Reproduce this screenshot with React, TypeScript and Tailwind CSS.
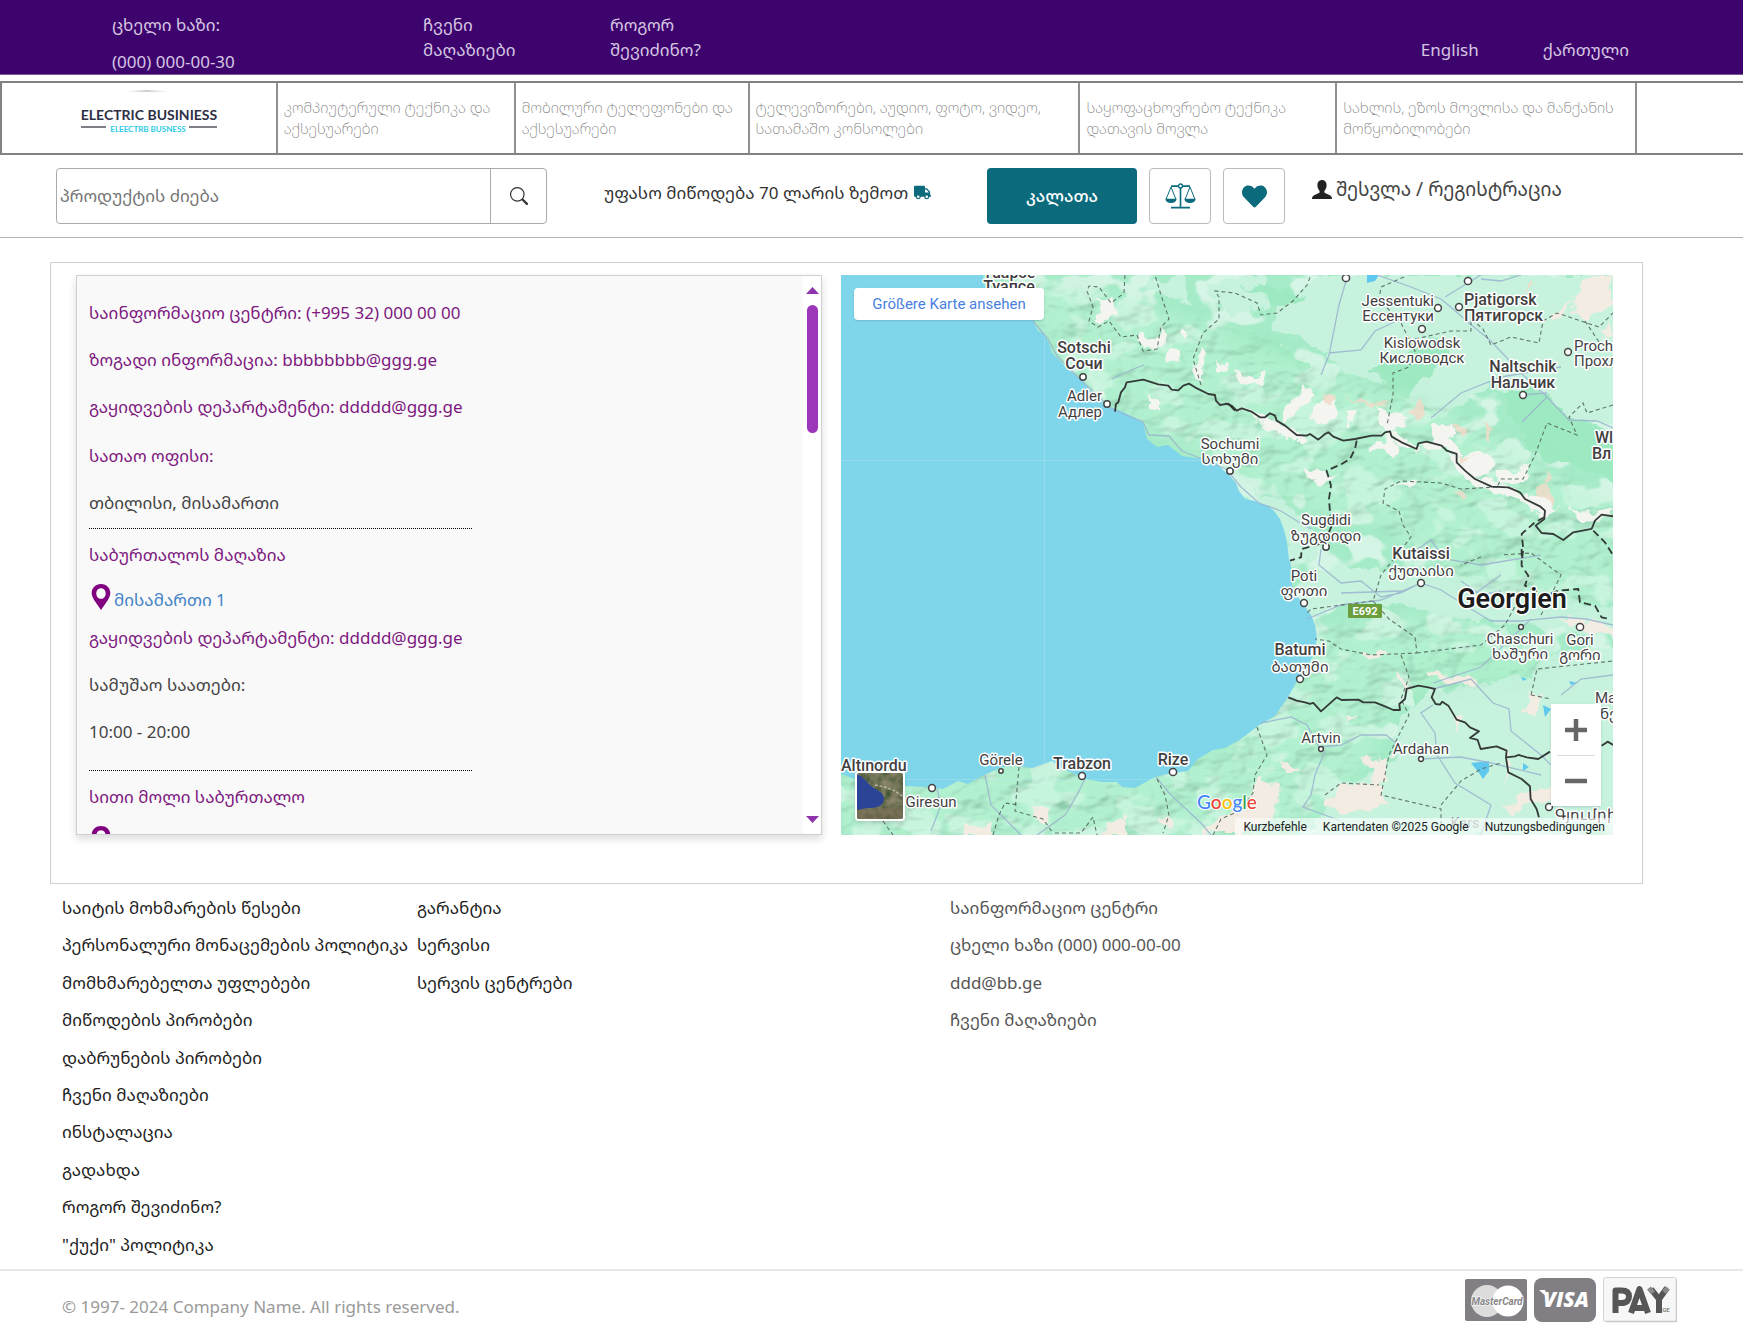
import type { ReactNode } from "react";
import { BsSearch } from "react-icons/bs";
import { FaHeart, FaTruck } from "react-icons/fa";

const navItems = [
  ["კომპიუტერული ტექნიკა და", "აქსესუარები"],
  ["მობილური ტელეფონები და", "აქსესუარები"],
  ["ტელევიზორები, აუდიო, ფოტო, ვიდეო,", "სათამაშო კონსოლები"],
  ["საყოფაცხოვრებო ტექნიკა", "დათავის მოვლა"],
  ["სახლის, ეზოს მოვლისა და მანქანის", "მოწყობილობები"],
];

const footerInfo = [
  "საიტის მოხმარების წესები",
  "პერსონალური მონაცემების პოლიტიკა",
  "მომხმარებელთა უფლებები",
  "მიწოდების პირობები",
  "დაბრუნების პირობები",
  "ჩვენი მაღაზიები",
  "ინსტალაცია",
  "გადახდა",
  "როგორ შევიძინო?",
  '"ქუქი" პოლიტიკა',
];
const footerService = ["გარანტია", "სერვისი", "სერვის ცენტრები"];
const footerContact = ["საინფორმაციო ცენტრი", "ცხელი ხაზი (000) 000-00-00", "ddd@bb.ge", "ჩვენი მაღაზიები"];

function TopBar() {
  return (
    <div className="flex items-start border-b border-[#7b5a96] bg-[#3d046e] pt-3 pr-[114px] pl-28 leading-[25px] text-[#d5c6e2]">
      <div className="w-[311px]">
        <p>ცხელი ხაზი:</p>
        <p className="mt-3">(000) 000-00-30</p>
      </div>
      <a href="#stores" className="w-[187px]">
        ჩვენი
        <br />
        მაღაზიები
      </a>
      <a href="#how">
        როგორ
        <br />
        შევიძინო?
      </a>
      <div className="mt-[25px] ml-auto flex gap-16">
        <a href="#en">English</a>
        <a href="#ka">ქართული</a>
      </div>
    </div>
  );
}

function Logo() {
  return (
    <svg viewBox="0 0 140 44" className="h-11 w-[140px] overflow-visible" role="img" aria-label="Electric Business">
      <defs>
        <radialGradient id="shade" cx="0.5" cy="0" r="0.5">
          <stop offset="0" stopColor="#8a8a8a" />
          <stop offset="1" stopColor="#ffffff" stopOpacity="0" />
        </radialGradient>
      </defs>
      <ellipse cx="68" cy="1" rx="30" ry="2.5" fill="url(#shade)" />
      <text x="70" y="28" textAnchor="middle" fill="#2e2f44" className="font-['Lato',sans-serif] text-[14px] font-bold">
        ELECTRIC BUSINIESS
      </text>
      <path d="M2 35H27M110 35H138" stroke="#55555f" strokeWidth="1.6" />
      <text x="69" y="40" textAnchor="middle" fill="#2ccbe6" className="font-['Lato',sans-serif] text-[8px] font-bold">
        ELEECTRB BUSNESS
      </text>
    </svg>
  );
}

function CategoryNav() {
  return (
    <nav className="mt-[6px] grid h-[74px] grid-cols-[276fr_238fr_234fr_331fr_257fr_300fr_106fr] border-y-2 border-l-2 border-[#828282]">
      <a href="#home" className="flex items-start justify-center border-r-2 border-[#909090] pt-[9px] pl-5">
        <Logo />
      </a>
      {navItems.map(([a, b]) => (
        <a
          key={a}
          href="#category"
          className="flex flex-col justify-center border-r-2 border-[#909090] pl-[6px] text-[15px] leading-[21px] font-extralight whitespace-nowrap text-[#777]"
        >
          <span>{a}</span>
          <span>{b}</span>
        </a>
      ))}
      <div />
    </nav>
  );
}

function ScalesIcon() {
  return (
    <svg viewBox="0 0 31 26" className="h-[26px] w-[31px]" fill="none" stroke="#0b6b7d" aria-hidden="true">
      <circle cx="15.5" cy="3" r="2" strokeWidth="1.3" />
      <path d="M6 3.2h7.5M17.5 3.2H25" strokeWidth="1.8" />
      <path d="M15.5 5v19M6 24.6h19" strokeWidth="1.6" />
      <path d="M6 4 1.2 16M6 4l4.8 12M25 4l-4.8 12M25 4l4.8 12" strokeWidth="1" />
      <path
        d="M0.3 15.8H11.7C11.3 18.7 9 20 6 20S0.7 18.7 0.3 15.8ZM19.3 15.8H30.7C30.3 18.7 28 20 25 20S19.7 18.7 19.3 15.8Z"
        fill="#0b6b7d"
        stroke="none"
      />
    </svg>
  );
}

function UserIcon() {
  return (
    <svg viewBox="0 0 20 19" className="h-[19px] w-5" fill="#222" aria-hidden="true">
      <path d="M10 0C7.2 0 5.4 2.2 5.4 5.2c0 2.2 1 4.4 2.2 5.7v1.7C6.5 13.6 3.3 14.5 1.7 15.5.4 16.3 0 17.400 0 19h20c0-1.600-.4-2.700-1.700-3.500-1.600-1-4.800-1.900-5.900-2.900v-1.700c1.200-1.300 2.200-3.500 2.200-5.700C14.600 2.200 12.800 0 10 0Z" />
    </svg>
  );
}

function Toolbar() {
  return (
    <div className="flex h-[83px] items-start border-b border-[#b3b3b3] pt-[13px] pl-14">
      <form className="flex h-14 w-[491px] rounded border border-[#aaa]">
        <label htmlFor="search" className="sr-only">
          პროდუქტის ძიება
        </label>
        <input
          id="search"
          type="text"
          placeholder="პროდუქტის ძიება"
          className="min-w-0 flex-1 rounded-l pl-[3px] outline-none placeholder:text-[#757575]"
        />
        <button type="button" aria-label="ძიება" className="flex w-14 items-center justify-center border-l border-[#aaa]">
          <BsSearch size={18} color="#333" />
        </button>
      </form>
      <p className="mt-3 ml-[57px] flex w-[383px] items-center gap-[6px] leading-[25px] text-[#333]">
        უფასო მიწოდება 70 ლარის ზემოთ
        <FaTruck size={17} color="#0b6b7d" />
      </p>
      <button type="button" className="h-14 w-[150px] rounded bg-[#0b6b7d] font-medium text-white">
        კალათა
      </button>
      <button type="button" aria-label="შედარება" className="ml-3 flex h-14 w-[62px] items-center justify-center rounded border border-[#bbb]">
        <ScalesIcon />
      </button>
      <button type="button" aria-label="რჩეულები" className="ml-3 flex h-14 w-[62px] items-center justify-center rounded border border-[#bbb]">
        <FaHeart size={25} color="#0b6b7d" />
      </button>
      <a href="#login" className="mt-2 ml-[27px] flex items-center gap-1 text-[19px] leading-[27px] text-[#444]">
        <UserIcon />
        შესვლა / რეგისტრაცია
      </a>
    </div>
  );
}

function PinIcon() {
  return (
    <svg viewBox="0 0 20 26" className="h-[26px] w-5" aria-hidden="true">
      <path
        fillRule="evenodd"
        fill="#800080"
        d="M10 0C4.500 0 .7 4 .7 9c0 2.600 1.100 4.700 2.400 7L10 26l6.900-10c1.300-2.300 2.400-4.400 2.400-7C19.300 4 15.500 0 10 0Zm0 4.200c2.700 0 4.700 2.200 4.700 5.200s-2 5.400-4.700 5.400-4.700-2.400-4.700-5.400S7.300 4.200 10 4.200Z"
      />
    </svg>
  );
}

function Rule() {
  return <hr className="mt-[13px] border-t border-dotted border-black" />;
}

function AddressLink({ children }: { children: ReactNode }) {
  return (
    <a href="#address" className="mt-[17px] flex gap-[3px] pl-[2px] text-[#4283c4]">
      <PinIcon />
      <span className="mt-[3px]">{children}</span>
    </a>
  );
}

function StoresPanel() {
  return (
    <section className="flex h-[560px] border border-[#d0d0d0] bg-[#f9f9f9] shadow-[0_4px_8px_rgba(0,0,0,0.14)]">
      <div className="flex-1 overflow-hidden pt-6 pl-3">
        <div className="w-fit min-w-[383px] leading-[25px] whitespace-nowrap text-[#444]">
          <p className="text-[#7d187f]">საინფორმაციო ცენტრი: (+995 32) 000 00 00</p>
          <p className="mt-[22px] text-[#7d187f]">ზოგადი ინფორმაცია: bbbbbbbb@ggg.ge</p>
          <p className="mt-[22px] text-[#7d187f]">გაყიდვების დეპარტამენტი: ddddd@ggg.ge</p>
          <p className="mt-6 text-[#7d187f]">სათაო ოფისი:</p>
          <p className="mt-[22px]">თბილისი, მისამართი</p>
          <Rule />
          <p className="mt-[13px] text-[#7d187f]">საბურთალოს მაღაზია</p>
          <AddressLink>მისამართი 1</AddressLink>
          <p className="mt-[13px] text-[#7d187f]">გაყიდვების დეპარტამენტი: ddddd@ggg.ge</p>
          <p className="mt-[22px]">სამუშაო საათები:</p>
          <p className="mt-[22px] mb-[26px]">10:00 - 20:00</p>
          <Rule />
          <p className="mt-[13px] text-[#7d187f]">სითი მოლი საბურთალო</p>
          <AddressLink>მისამართი 2</AddressLink>
        </div>
      </div>
      <div className="flex w-[18px] flex-col items-center bg-white pt-[11px] pb-[11px]">
        <svg viewBox="0 0 13 7" className="h-[7px] w-[13px]" aria-hidden="true">
          <path d="M0 7 6.500 0 13 7Z" fill="#8f34ad" />
        </svg>
        <div className="mt-[11px] h-32 w-[11px] rounded-full bg-[#9b37b8]" />
        <svg viewBox="0 0 13 7" className="mt-auto h-[7px] w-[13px]" aria-hidden="true">
          <path d="M0 0 6.500 7 13 0Z" fill="#8f34ad" />
        </svg>
      </div>
    </section>
  );
}

const SEA =
  "M0 0H142L145 18 203 45 192 46 197 56 203 59 207 66 211 78 224 91 232 98 242 107 254 121 266 131 280 136 302 147 306 164 316 172 327 170 341 181 361 184 374 187 381 194 389 201 395 208 398 216 404 224 414 226 427 231 433 236 439 244 443 255 446 267 448 284 451 295 451 310 456 321 464 331 470 340 474 350 476 364 472 380 464 397 455 408 447 422 434 441 417 451 400 464 384 473 372 475 357 484 347 496 331 498 314 502 294 513 281 512 276 507 261 507 244 504 227 496 219 492 211 486 191 493 176 491 161 492 150 497 141 501 127 509 117 506 102 514 84 512 64 511 14 504 0 499Z";

type Label = { x: number; y: number; t: string; bold?: boolean; anchor?: "start" | "middle" | "end" };

const labels: Label[] = [
  { x: 168, y: 3, t: "Tuapse", bold: true },
  { x: 168, y: 17, t: "Туапсе", bold: true },
  { x: 243, y: 78, t: "Sotschi", bold: true },
  { x: 243, y: 94, t: "Сочи", bold: true },
  { x: 261, y: 126, t: "Adler", anchor: "end" },
  { x: 261, y: 142, t: "Адлер", anchor: "end" },
  { x: 389, y: 174, t: "Sochumi" },
  { x: 389, y: 189, t: "სოხუმი" },
  { x: 593, y: 31, t: "Jessentuki", anchor: "end" },
  { x: 593, y: 46, t: "Ессентуки", anchor: "end" },
  { x: 623, y: 30, t: "Pjatigorsk", bold: true, anchor: "start" },
  { x: 623, y: 46, t: "Пятигорск", bold: true, anchor: "start" },
  { x: 581, y: 73, t: "Kislowodsk" },
  { x: 581, y: 88, t: "Кисловодск" },
  { x: 682, y: 97, t: "Naltschik", bold: true },
  { x: 682, y: 113, t: "Нальчик", bold: true },
  { x: 733, y: 76, t: "Proch", anchor: "start" },
  { x: 733, y: 91, t: "Прохл", anchor: "start" },
  { x: 754, y: 168, t: "Wl", bold: true, anchor: "start" },
  { x: 751, y: 184, t: "Вл", bold: true, anchor: "start" },
  { x: 485, y: 250, t: "Sugdidi" },
  { x: 485, y: 266, t: "ზუგდიდი" },
  { x: 580, y: 284, t: "Kutaissi", bold: true },
  { x: 580, y: 301, t: "ქუთაისი" },
  { x: 463, y: 306, t: "Poti" },
  { x: 463, y: 321, t: "ფოთი" },
  { x: 459, y: 380, t: "Batumi", bold: true },
  { x: 459, y: 397, t: "ბათუმი" },
  { x: 679, y: 369, t: "Chaschuri" },
  { x: 679, y: 384, t: "ხაშური" },
  { x: 739, y: 370, t: "Gori" },
  { x: 739, y: 385, t: "გორი" },
  { x: 754, y: 428, t: "Ma", anchor: "start" },
  { x: 759, y: 444, t: "ნე", anchor: "start" },
  { x: 480, y: 468, t: "Artvin" },
  { x: 580, y: 479, t: "Ardahan" },
  { x: 0, y: 496, t: "Altınordu", bold: true, anchor: "start" },
  { x: 90, y: 532, t: "Giresun" },
  { x: 160, y: 490, t: "Görele" },
  { x: 241, y: 494, t: "Trabzon", bold: true },
  { x: 332, y: 490, t: "Rize", bold: true },
  { x: 714, y: 545, t: "Գյումրի", anchor: "start" },
];

const towns: [number, number, number][] = [
  [242, 102, 3.2], [266, 129, 3.2], [389, 196, 3.2], [505, 3, 3.6], [627, 6, 3.6], [597, 33, 3.4], [618, 32, 3.4],
  [581, 54, 3.4], [682, 120, 3.4], [727, 77, 3.4], [485, 272, 3.2], [580, 308, 3.4], [463, 328, 3.4], [459, 404, 3.4],
  [680, 352, 2.4], [739, 352, 3.6], [480, 474, 2.4], [580, 484, 2.4], [91, 513, 3.4], [160, 496, 2.2], [241, 501, 3.4],
  [332, 497, 3.6], [708, 532, 3.4],
];

function MapDrawing() {
  return (
    <svg viewBox="0 0 772 560" preserveAspectRatio="xMidYMid slice" className="h-full w-full" role="img" aria-label="Georgien">
      <defs>
        <filter id="rough" x="-5%" y="-5%" width="110%" height="110%">
          <feTurbulence type="fractalNoise" baseFrequency="0.06" numOctaves="3" seed="4" result="n" />
          <feDisplacementMap in="SourceGraphic" in2="n" scale="18" xChannelSelector="R" yChannelSelector="G" />
        </filter>
        <filter id="relief" x="0" y="0" width="100%" height="100%">
          <feTurbulence type="fractalNoise" baseFrequency="0.028 0.045" numOctaves="3" seed="11" result="n" />
          <feDiffuseLighting in="n" surfaceScale="9" diffuseConstant="1.2" lightingColor="#ffffff" result="l">
            <feDistantLight azimuth="225" elevation="55" />
          </feDiffuseLighting>
          <feComposite in="l" in2="SourceAlpha" operator="in" />
        </filter>
        <filter id="patches" x="0" y="0" width="100%" height="100%">
          <feTurbulence type="fractalNoise" baseFrequency="0.022 0.03" numOctaves="3" seed="23" result="n" />
          <feColorMatrix in="n" type="matrix" values="0 0 0 0 0.79  0 0 0 0 0.95  0 0 0 0 0.87  14 0 0 0 -7.4" result="p" />
          <feComposite in="p" in2="SourceAlpha" operator="in" />
        </filter>
        <filter id="soft">
          <feGaussianBlur stdDeviation="8" />
        </filter>
        <mask id="hills">
          <g filter="url(#soft)" fill="#fff">
            <path d="M180 0 300 30 400 60 470 90 540 110 640 150 700 190 772 230V310L700 330 600 300 540 250 480 240 380 190 280 140 190 40Z" />
            <path d="M450 360 560 340 720 370 700 400 560 420 530 480 450 560H0V500L200 490 380 480Z" />
            <path d="M700 270H772V330H690Z" />
          </g>
        </mask>
      </defs>

      <rect width="772" height="560" fill="#a5ebc8" />
      <rect width="772" height="560" fill="#000" filter="url(#patches)" opacity="0.75" />

      <g filter="url(#rough)" fill="#c6f2de">
        <path d="M478 0H790V150L700 140 650 110 600 140 540 110 500 95 470 70 430 50 440 25Z" />
        <path d="M360 10 420 0 430 30 390 40ZM215 20 235 16 232 34ZM300 10 340 0 350 30Z" />
        <path d="M455 310 500 290 560 300 640 300 720 320 790 340V365L690 350 620 345 560 330 500 325 475 345Z" />
        <path d="M590 420 640 400 720 380 790 370V560H470L500 510 550 490 560 440Z" />
        <path d="M405 215 440 225 470 250 480 280 450 290 440 245Z" />
      </g>
      <g filter="url(#rough)" fill="#9de9c1">
        <path d="M530 95 590 60 615 70 560 130ZM660 120 690 110 730 140 790 170V215L740 190 690 180Z" />
        <path d="M400 10 440 15 470 20 440 30ZM385 60 440 65 470 90 430 100 390 85Z" />
        <path d="M560 380 640 375 700 385 690 400 600 410 575 430Z" />
      </g>

      <g mask="url(#hills)">
        <rect width="772" height="560" fill="#9df0c3" opacity="0.4" />
        <rect width="772" height="560" fill="#000" filter="url(#relief)" opacity="0.3" className="mix-blend-multiply" />
      </g>

      <g filter="url(#rough)" fill="#f4f4f1">
        <path d="M256 26 272 24 275 36 264 46 257 42ZM322 48 326 58 324 68 315 74 300 72 298 60 308 66 318 60ZM342 54 348 60 344 66 339 60ZM332 72 340 84 326 88ZM358 68 364 76 358 92 362 106 354 102 352 84ZM378 84 386 92 380 98ZM308 124 320 124 320 136 308 134Z" />
        <path d="M392 96 410 102 424 102 418 110 398 106ZM440 130 455 118 465 108 470 118 456 140 444 150ZM474 128 490 118 496 124 488 150 472 146ZM504 134 516 134 512 150 504 150ZM536 132 560 140 566 148 552 156 546 150ZM590 152 612 148 606 170 592 166Z" />
        <path d="M464 194 480 196 498 202 484 208 466 204ZM532 172 548 160 564 178 552 182ZM610 180 630 176 652 182 646 198 620 196ZM656 196 690 194 686 206 662 208ZM690 222 706 224 718 234 700 240ZM548 206 576 208 570 212ZM730 236 772 234 770 244 740 246ZM604 182 620 184 640 202 672 212 700 230 704 240 690 230 656 218 630 208Z" />
        <path d="M396 132 430 146 456 156 470 166 454 166 420 152ZM540 150 566 166 580 176 560 172ZM576 170 600 162 622 176 610 180Z" />
      </g>
      <g filter="url(#rough)" fill="#f3ece2">
        <path d="M524 378 544 378 548 380 536 384 522 382ZM558 394 566 410 572 418 562 412ZM586 396 640 404 632 408 590 402ZM508 436 518 440 508 446ZM440 482 460 496 448 496ZM420 500 440 520 430 540 400 560 360 560 395 530ZM500 510 540 504 550 530 500 540 484 530ZM520 486 550 480 540 510ZM125 552 150 548 152 560H122ZM196 532 208 530 208 546 194 546ZM268 548 284 544 284 560H258ZM320 544 330 542 332 554 322 556ZM688 418 700 420 696 440 684 436ZM610 438 620 446 616 456ZM664 470 672 490 666 510Z" />
        <path d="M660 536 720 524 706 512 680 520ZM740 6 772 0V30L740 46 732 36ZM710 50 736 24 712 40ZM740 50 760 58 770 46 768 62ZM716 340 740 346 772 352 768 360 740 354Z" />
      </g>
      <g filter="url(#rough)" fill="#f0dcc8" opacity="0.85">
        <path d="M480 116 496 120 490 134 482 126ZM504 118 530 126 552 130 530 132ZM566 140 580 124 584 140 572 144ZM612 148 626 152 622 162 612 158ZM640 150 654 156 644 166ZM618 176 632 180 622 186ZM708 196 712 206 700 208ZM694 210 704 208 712 228 696 224ZM614 216 628 218 622 224ZM690 16 690 8 684 20Z" />
      </g>

      <path d={SEA} fill="#7fd6ea" />
      <path d="M0 185.500H365M203.500 45V490M64 504.500H314" stroke="#b8e8f2" strokeWidth="1" opacity="0.35" />
      <g fill="#5fc8ee">
        <path d="M526 0H538L534 6 526 8ZM630 488 648 486 648 496 642 504 638 498ZM702 430 710 434 704 442ZM682 488 688 492 682 496ZM728 406 736 408 730 410ZM604 304 608 302ZM680 402 686 404 682 406Z" />
      </g>

      <g fill="none" stroke="#9bb4cf" strokeWidth="1.300" opacity="0.85">
        <path d="M192 46 207 64 216 81 242 107 271 134 302 147 308 160 328 161 341 176 361 184 385 194 400 212 418 228 440 236 456 246 470 254" />
        <path d="M271 104 290 95 303 90M505 6 498 30 492 60 488 80 480 100M488 78 520 75 534 56 560 44M536 0 570 12 600 24 612 34 628 48 650 66 680 98 704 120 728 145 756 146 772 153M604 22 640 0M640 4 660 6 680 0" />
        <path d="M590 143 620 118 660 102 720 92M680 120 706 118M681 147 706 122" />
        <path d="M480 274 478 290 500 308 520 306 540 322 560 318 580 308M466 344 500 330 540 325 580 308 600 315 630 334 650 346 680 346 720 342 745 344 772 350" />
        <path d="M420 448 450 442 466 450 478 472 500 470 520 460 545 460 560 472M484 476 474 500 470 520 462 532 500 546M580 484 620 482 650 488 700 500M592 430 580 438 594 458 596 480 614 508 650 530 640 560M592 408 640 392 690 344M592 414 630 404 652 428 668 434 670 456 700 480 710 490M772 400 740 404 720 420" />
        <path d="M244 504 236 520 224 540 196 560M144 500 150 530 180 560M96 514 100 530 90 556M315 502 330 520 360 548 370 560" />
        <path d="M500 318 560 316M560 285 590 265 604 284 640 290 700 280M620 306 640 320 660 316M630 334 632 320 660 300" />
      </g>

      <g fill="none" stroke="#56695f" strokeWidth="1.100" strokeDasharray="4 3" opacity="0.9">
        <path d="M284 0 283 18 270 28 258 12 248 11 246 16 252 32 248 46 257 52 268 46 280 62 296 60 302 76 316 74 320 52 328 44 320 20 314 0M360 110 352 84 362 58 378 44 378 22 374 16 394 18 416 28 420 40 436 38 452 26 466 10 470 0" />
        <path d="M563 2 540 12 538 24 560 48 574 76 568 92 552 98 552 120 546 150M574 64 610 56 630 56 630 44 642 54 650 70 670 62 698 68 702 46 716 38 740 46 758 52 772 38M744 46 760 70M772 130 746 138 742 128 728 142 736 160 706 148 694 180 682 204 660 204 656 212" />
        <path d="M656 212 620 214 600 208 560 206 544 214 542 228 558 236 562 250 570 262 556 280 540 300 532 326 470 334 466 338M532 326 548 344 574 362 576 378 530 380 500 374 488 366 474 364M576 378 640 370 664 350 680 320M560 380 568 402 560 424 568 440 548 480 540 520 600 534 600 560M640 282 620 290M700 340 720 300 690 278 660 280" />
        <path d="M416 452 426 480 414 500 412 518 396 540M178 492 174 536 202 544 212 558M152 560 158 540 164 528 178 530M316 504 324 520 328 540 322 558M372 560 380 544 398 536M484 520 500 508 538 510M600 530 620 506 640 494 660 488M690 420 696 394 772 386M690 420 710 424" />
        <path d="M42 546 52 560M214 558 240 558 252 542 256 560" />
      </g>

      <g fill="none" stroke="#333a38" strokeLinejoin="round">
        <g transform="translate(-6 -16) scale(0.3333)" strokeWidth="5.500">
          <path d="M840 458 843 435 850 430 858 400 870 385 875 370 925 362 970 376 1000 380 1010 392 1030 394 1045 380 1062 374 1080 385 1120 405 1140 408 1143 425 1155 438 1180 434 1200 455" />
        </g>
        <g transform="translate(384 -16) scale(0.3333)" strokeWidth="5.500">
          <path d="M0 433 20 440 35 455 50 448 80 458 105 475 120 475 135 463 150 470 155 485 180 500 215 528 245 530 255 525 280 542 300 525 310 520 325 533 355 545 390 540 440 530 470 530 480 520 495 517 500 533 530 550 575 570 580 553 605 548 650 560 665 575 695 585 695 610 720 635 750 660 800 683 850 685 885 700 900 720 945 742 960 755 958 780 932 800 950 822 985 825 1015 843 1045 820 1100 810 1110 785 1130 767 1165 772" />
          <path strokeDasharray="22 12" d="M395 545 390 570 375 600 350 615 305 635 318 680 312 720 315 760 320 800 300 850 230 870 228 895 195 905" />
          <path strokeDasharray="22 12" d="M958 775 930 790 890 825 895 870 890 910M1105 815 1140 850 1165 890" />
        </g>
        <g transform="translate(384 274) scale(0.3333)" strokeWidth="5.500">
          <path d="M190 445 215 455 240 460 255 465 265 462 288 487 335 445 350 453 400 452 415 460 450 460 480 472 505 483 525 483 523 465 540 450 545 420 580 410 610 415 630 420 620 445 632 465 645 467 652 458 670 470 695 512 720 520 735 535 762 547 735 567 758 573 767 600 815 592 845 605 843 625 870 622 880 618 905 625 940 630 975 608M843 625 850 670 890 690 915 712 917 750 935 780 942 805M1130 590 1148 578 1165 588" />
          <path strokeDasharray="22 12" d="M890 0 890 50 910 80 900 110 960 140 1000 125 1060 120 1065 160 1110 170 1130 205 1155 210" />
        </g>
      </g>

      {towns.map(([x, y, r]) => (
        <circle key={`${x}-${y}`} cx={x} cy={y} r={r} fill="#fff" stroke="#444" strokeWidth="1.500" />
      ))}

      <rect x="507" y="329" width="34" height="14" rx="1" fill="#6a9e3c" />
      <text x="524" y="340" textAnchor="middle" fill="#fff" className="font-['Roboto',sans-serif] text-[11px] font-bold">
        E692
      </text>

      <g fill="#3f3f3f" stroke="#fff" strokeWidth="3" strokeLinejoin="round" paintOrder="stroke">
        {labels.map((l) => (
          <text
            key={l.t}
            x={l.x}
            y={l.y}
            textAnchor={l.anchor ?? "middle"}
            className={
              l.bold
                ? "font-['Roboto','Noto_Sans_Georgian',sans-serif] text-[16px] font-medium"
                : "font-['Roboto','Noto_Sans_Georgian',sans-serif] text-[15px]"
            }
          >
            {l.t}
          </text>
        ))}
        <text x="671" y="333" textAnchor="middle" fill="#1c1c1c" className="font-['Roboto',sans-serif] text-[27px] font-semibold">
          Georgien
        </text>
      </g>
      <text x="624" y="553" textAnchor="middle" fill="#888" className="font-['Roboto',sans-serif] text-[14px]">
        Kars
      </text>
      <text x="386" y="534" textAnchor="middle" stroke="#fff" strokeWidth="2" paintOrder="stroke" className="font-['Lato',sans-serif] text-[19px] font-medium">
        <tspan fill="#4285f4">G</tspan>
        <tspan fill="#ea4335">o</tspan>
        <tspan fill="#fbbc05">o</tspan>
        <tspan fill="#4285f4">g</tspan>
        <tspan fill="#34a853">l</tspan>
        <tspan fill="#ea4335">e</tspan>
      </text>
    </svg>
  );
}

function SatelliteThumb() {
  return (
    <svg viewBox="0 0 46 46" className="h-full w-full" aria-hidden="true">
      <defs>
        <filter id="ground" x="0" y="0" width="100%" height="100%">
          <feTurbulence type="fractalNoise" baseFrequency="0.12" numOctaves="3" seed="3" />
          <feColorMatrix type="matrix" values="0.35 0 0 0 -0.02  0.25 0 0 0 0.04  0.2 0 0 0 -0.01  0 0 0 0 1" />
        </filter>
      </defs>
      <rect width="46" height="46" filter="url(#ground)" />
      <path d="M0 37 12 36 46 34V46H0Z" fill="#7a6b56" opacity="0.55" />
      <path d="M0 2C5 2 8 7 13 12S27 18 27 26 19 35 10 35L0 37Z" fill="#2c4496" />
      <path d="M18 12 28 14 38 18 45 23" stroke="#b9b3a4" strokeWidth="1.500" strokeDasharray="3 1.500" fill="none" />
    </svg>
  );
}

function MapPanel() {
  return (
    <section className="relative h-[560px] overflow-hidden">
      <MapDrawing />
      <a
        href="#map"
        className="absolute top-[13px] left-[13px] flex h-8 w-[190px] items-center justify-center rounded-sm bg-white font-['Roboto',sans-serif] text-[15px] text-[#4a7fe0] shadow"
      >
        Größere Karte ansehen
      </a>
      <button type="button" aria-label="Satellit" className="absolute bottom-[14px] left-[14px] size-[50px] overflow-hidden rounded border-2 border-white shadow-md">
        <SatelliteThumb />
      </button>
      <div className="absolute right-3 bottom-[29px] flex w-[50px] flex-col items-center bg-white shadow">
        <button type="button" aria-label="Vergrößern" className="flex h-[51px] w-full items-center justify-center">
          <svg viewBox="0 0 22 22" className="size-[22px]" aria-hidden="true">
            <path d="M11 0V22M0 11H22" stroke="#666" strokeWidth="4.500" />
          </svg>
        </button>
        <div className="h-px w-[38px] bg-[#ddd]" />
        <button type="button" aria-label="Verkleinern" className="flex h-[50px] w-full items-center justify-center">
          <svg viewBox="0 0 22 22" className="size-[22px]" aria-hidden="true">
            <path d="M0 11H22" stroke="#666" strokeWidth="4.500" />
          </svg>
        </button>
      </div>
      <div className="absolute right-0 bottom-0 flex h-[17px] items-center gap-4 bg-white/60 px-2 font-['Roboto',sans-serif] text-[12px] text-[#222]">
        <button type="button">Kurzbefehle</button>
        <span>Kartendaten ©2025 Google</span>
        <a href="#terms">Nutzungsbedingungen</a>
      </div>
    </section>
  );
}

function LinkColumn({ items, muted }: { items: string[]; muted?: boolean }) {
  return (
    <ul className={muted ? "grid grid-rows-10 text-[#555]" : "grid grid-rows-10 text-[#222]"}>
      {items.map((item) => (
        <li key={item} className="flex items-center whitespace-nowrap">
          <a href="#info">{item}</a>
        </li>
      ))}
    </ul>
  );
}

function Payments() {
  return (
    <div className="flex items-center gap-[7px]">
      <svg viewBox="0 0 62 42" className="h-[42px] w-[62px]" role="img" aria-label="MasterCard">
        <rect width="62" height="42" rx="2" fill="#817f83" />
        <circle cx="22" cy="22" r="16" fill="#dcdcdc" />
        <circle cx="43" cy="22" r="15.500" fill="#fff" />
        <text x="32" y="26" textAnchor="middle" fill="#8a888b" stroke="#fff" strokeWidth="1" paintOrder="stroke" className="font-['Roboto',sans-serif] text-[10px] font-bold italic">
          MasterCard
        </text>
      </svg>
      <svg viewBox="0 0 62 44" className="h-11 w-[62px]" role="img" aria-label="Visa">
        <rect width="62" height="44" rx="8" fill="#817f83" />
        <text x="32" y="29" textAnchor="middle" fill="#fff" className="font-['Open_Sans',sans-serif] text-[21px] font-extrabold italic">
          VISA
        </text>
        <path d="M5 12h6l4 9Z" fill="#fff" />
      </svg>
      <svg viewBox="0 0 74 46" className="h-[46px] w-[74px]" role="img" aria-label="Pay GE">
        <rect x="0.500" y="0.500" width="73" height="44" rx="2" fill="#f7f7f7" stroke="#d4d4d4" />
        <path d="M3 44.500H73.500V2" fill="none" stroke="#c9c9c9" strokeWidth="1.500" />
        <g fill="none" stroke="#565656" strokeWidth="6" strokeLinejoin="round">
          <path d="M12.500 36V13.500H18.500C24 13.500 26 16 26 19.500S24 26 18.500 26H13M28 36 36.500 12 45 36M32 31H42" />
        </g>
        <path d="M48 12 56 22 64 11M56 21V36" fill="none" stroke="#565656" strokeWidth="6" />
        <path d="M46 11 50 16M61 15 65 11" stroke="#8b8b8b" strokeWidth="5" />
        <text x="63" y="35" textAnchor="middle" fill="#888" className="font-['Roboto',sans-serif] text-[6px] font-bold">
          GE
        </text>
      </svg>
    </div>
  );
}

export default function App() {
  return (
    <div className="min-h-screen bg-white font-['Noto_Sans_Georgian','Noto_Sans',sans-serif] text-[17px]">
      <header>
        <TopBar />
        <CategoryNav />
        <Toolbar />
      </header>
      <main className="mt-6 mr-[100px] ml-[50px] grid grid-cols-[746fr_772fr] gap-[19px] border border-[#d0d0d0] pt-3 pr-[29px] pb-12 pl-[25px]">
        <StoresPanel />
        <MapPanel />
      </main>
      <footer>
        <div className="mt-[5px] grid h-[374px] grid-cols-[355px_533fr_793fr] pl-[62px]">
          <LinkColumn items={footerInfo} />
          <LinkColumn items={footerService} />
          <LinkColumn items={footerContact} muted />
        </div>
        <div className="mt-[6px] flex items-start justify-between border-t-2 border-[#e8e8e8] pt-[6px] pr-[66px] pl-[62px]">
          <p className="mt-[17px] leading-[25px] text-[#9a9a9a]">© 1997- 2024 Company Name. All rights reserved.</p>
          <Payments />
        </div>
      </footer>
    </div>
  );
}
